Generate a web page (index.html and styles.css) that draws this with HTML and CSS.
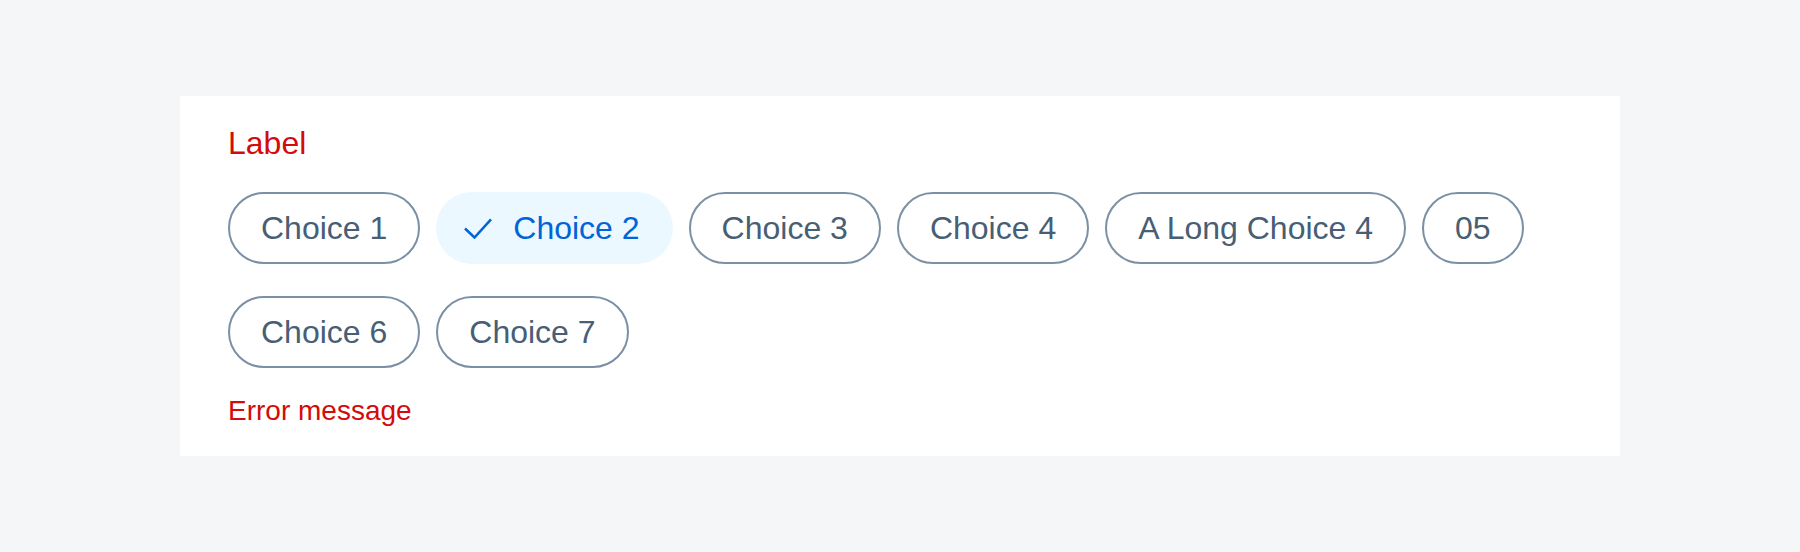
FILE: index.html
```html
<!DOCTYPE html>
<html lang="en">
<head>
  <meta charset="UTF-8">
  <meta name="viewport" content="width=device-width, initial-scale=1.0">
  <title>Chip group</title>
  <link rel="stylesheet" href="styles.css">
</head>
<body>
  <div class="card">
    <div class="label">Label</div>
    <div class="chip-group">
      <div class="chip">Choice 1</div>
      <div class="chip selected">
        <svg class="check" width="28" height="21" viewBox="0 0 28 21">
          <path d="M1 10.5 L10.5 19.5 L27 1.3" fill="none" stroke="currentColor" stroke-width="2.5"/>
        </svg>
        Choice 2
      </div>
      <div class="chip">Choice 3</div>
      <div class="chip">Choice 4</div>
      <div class="chip">A Long Choice 4</div>
      <div class="chip">05</div>
      <div class="chip">Choice 6</div>
      <div class="chip">Choice 7</div>
    </div>
    <div class="error">Error message</div>
  </div>
</body>
</html>
```

FILE: styles.css
```css
body {
  margin: 0;
  padding: 96px 180px;
  height: 552px;
  box-sizing: border-box;
  background-color: #f5f6f7;
  font-family: "Liberation Sans", Arial, sans-serif;
}
.card {
  background-color: #ffffff;
  padding: 27px 48px 25px;
}
.label {
  font-size: 32px;
  line-height: 40px;
  color: #d40b0b;
}
.chip-group {
  display: flex;
  flex-wrap: wrap;
  column-gap: 16px;
  row-gap: 32px;
  margin-top: 29px;
}
.chip {
  display: flex;
  align-items: center;
  height: 72px;
  box-sizing: border-box;
  padding: 0 31px;
  border: 2px solid #7b8fa5;
  border-radius: 36px;
  font-size: 32px;
  color: #475e75;
  white-space: nowrap;
}
.chip.selected {
  border-color: transparent;
  background-color: #ebf8ff;
  color: #0064d9;
}
.check {
  margin-left: -5px;
  margin-right: 21px;
}
.error {
  margin-top: 23px;
  font-size: 28px;
  line-height: 40px;
  color: #d40b0b;
}
```
